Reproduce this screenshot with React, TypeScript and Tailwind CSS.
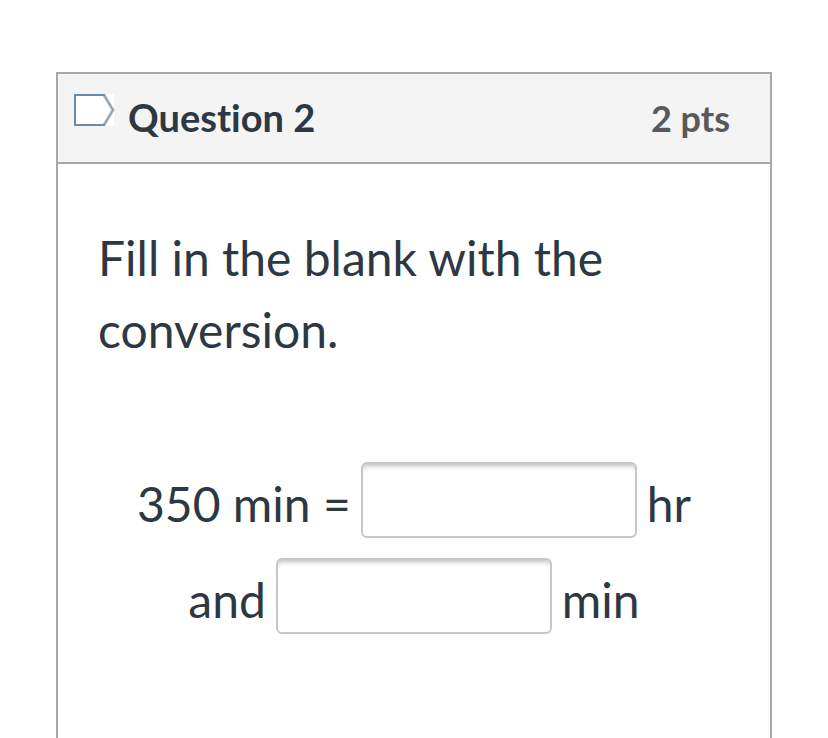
import React from "react";

interface BlankProps {
  label: string;
}

const Blank: React.FC<BlankProps> = ({ label }) => (
  <input
    type="text"
    aria-label={label}
    className="h-19 w-69 rounded-md border-2 border-[#c7c7c7] bg-white px-4 text-[#2d3843] shadow-[inset_0_6px_5px_-4px_rgba(0,0,0,0.25)] outline-none"
  />
);

const FlagButton: React.FC = () => (
  <button type="button" aria-label="Flag question" className="mb-4 block">
    <svg width="42" height="34" viewBox="0 0 42 34" fill="none">
      <path d="M0 1H40V33H0Z" fill="#fff" />
      <path d="M30 2L39 17L30 32" stroke="#a9bbc9" strokeWidth="3" />
      <path d="M31 32H1V2H31" stroke="#6d8ba3" strokeWidth="2" />
      <path d="M30 2L39 17L30 32" stroke="#8296a5" strokeWidth="1" />
    </svg>
  </button>
);

const App: React.FC = () => (
  <main className="min-h-screen bg-white px-14 pt-18 font-['Lato',sans-serif] text-[#2d3843] [font-variant-ligatures:none]">
    <section className="flex min-h-[calc(100vh-72px)] flex-col border-2 border-b-0 border-[#a8a8a8]">
      <header className="flex h-[90px] items-center border-b-2 border-[#a8a8a8] bg-[#f4f4f4] pr-10 pl-4">
        <FlagButton />
        <h1 className="ml-3 pb-0.5 text-[38px] font-bold">Question 2</h1>
        <span className="ml-auto text-[36px] font-bold text-[#595959]">
          2 pts
        </span>
      </header>

      <div className="px-10 pt-[58px] text-[48px]">
        <p className="leading-[72px]">Fill in the blank with the conversion.</p>
        <div className="mt-[86px] leading-none">
          <p className="flex h-24 items-center justify-center gap-2.5">
            <span className="pt-2">350 min =</span>
            <Blank label="Hours" />
            <span className="pt-2">hr</span>
          </p>
          <p className="flex h-24 items-center justify-center gap-2.5">
            <span className="pt-2">and</span>
            <Blank label="Minutes" />
            <span className="pt-2">min</span>
          </p>
        </div>
      </div>
    </section>
  </main>
);

export default App;
